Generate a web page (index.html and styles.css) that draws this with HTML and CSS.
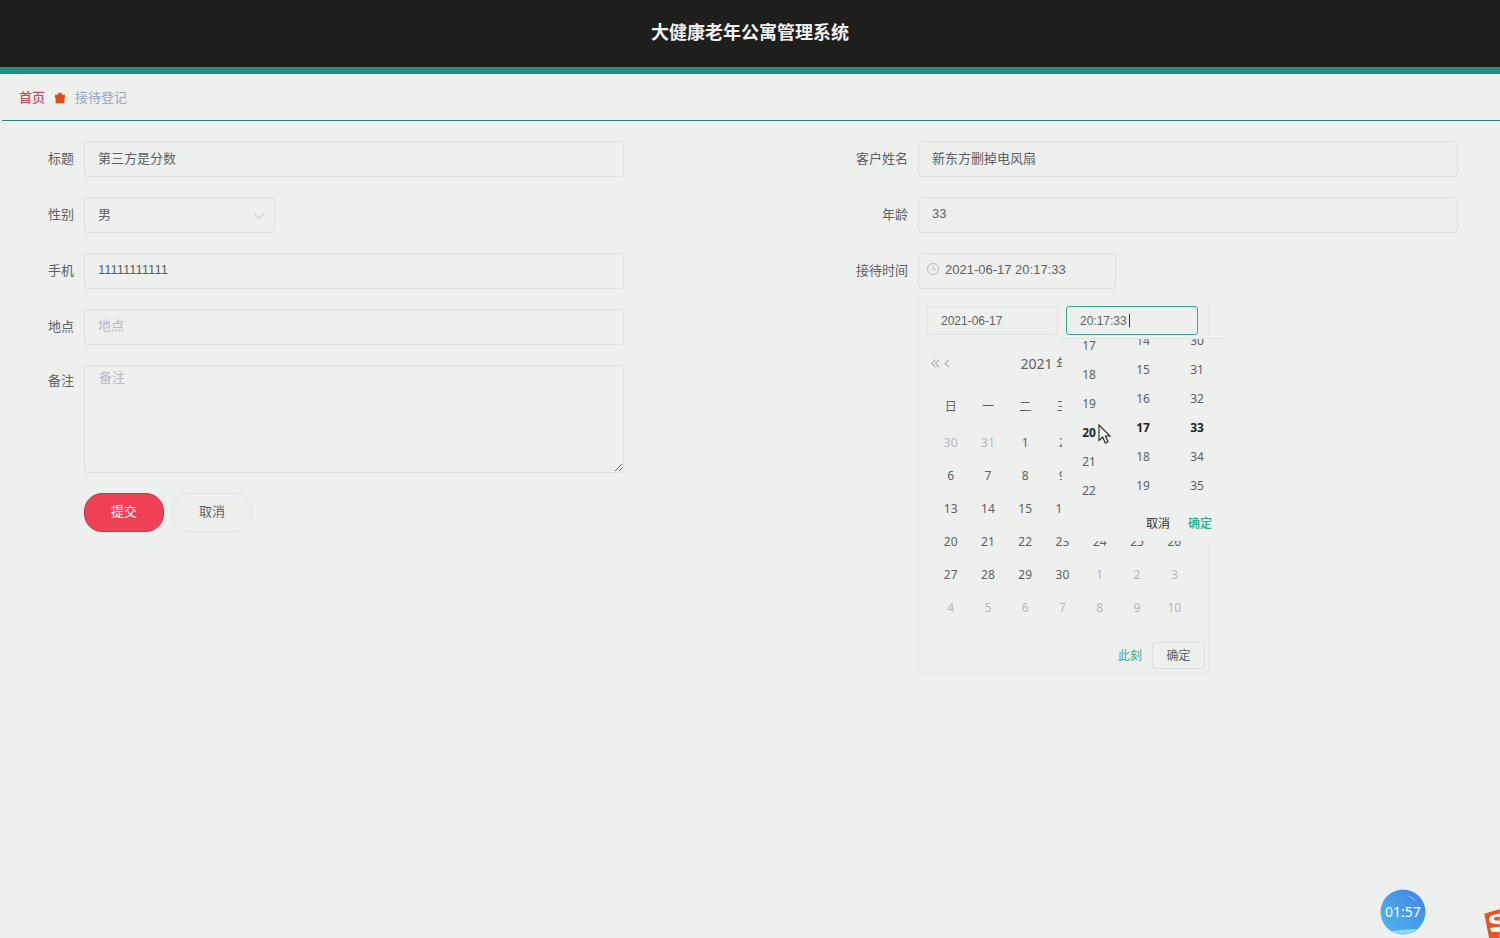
FILE: index.html
```html
<!DOCTYPE html>
<html lang="zh-CN">
<head>
<meta charset="utf-8">
<title>大健康老年公寓管理系统</title>
<link rel="stylesheet" href="styles.css">
</head>
<body>
<header class="topbar"><h1>大健康老年公寓管理系统</h1></header>
<nav class="crumbs" aria-label="面包屑">
  <a href="#" class="home">首页</a>
  <svg class="gift" viewBox="0 0 12 12" aria-hidden="true"><path d="M1 2.800h3L3.400 1.600 5 1.200 6 .3l1 .9 1.600.4L8 2.800h3V6H1zM1.600 5.800h8.800v5.400H1.600z" fill="#e8471c"/></svg>
  <span>接待登记</span>
</nav>
<main>
<form class="form">
  <div class="col">
    <div class="row"><label for="title">标题</label><input id="title" class="field" type="text" value="第三方是分数"></div>
    <div class="row"><label for="sex">性别</label>
      <div class="selectbox"><select id="sex" class="field"><option>男</option><option>女</option></select>
      <svg viewBox="0 0 12 12" aria-hidden="true"><path d="M1.500 4 6 8.500 10.500 4" fill="none" stroke="#b9bdc3"/></svg></div>
    </div>
    <div class="row"><label for="phone">手机</label><input id="phone" class="field" type="text" value="11111111111"></div>
    <div class="row"><label for="place">地点</label><input id="place" class="field" type="text" placeholder="地点"></div>
    <div class="row tall"><label for="note">备注</label><textarea id="note" class="field note" placeholder="备注"></textarea></div>
    <div class="actions"><button type="button" class="submit">提交</button><button type="button" class="cancel">取消</button></div>
  </div>
  <div class="col">
    <div class="row"><label for="name">客户姓名</label><input id="name" class="field" type="text" value="新东方删掉电风扇"></div>
    <div class="row"><label for="age">年龄</label><input id="age" class="field" type="text" value="33"></div>
    <div class="row"><label for="time">接待时间</label>
      <div class="datebox">
        <svg class="clock" viewBox="0 0 14 14" aria-hidden="true"><circle cx="7" cy="7" r="5.500" fill="none" stroke="#b9bdc3"/><path d="M7 3.500V7.500h3" fill="none" stroke="#b9bdc3"/></svg>
        <input id="time" class="field" type="text" value="2021-06-17 20:17:33">
        <section class="picker" aria-label="选择日期时间">
          <div class="picker-inputs">
            <input type="text" aria-label="日期" value="2021-06-17">
            <div class="timebox">
              <input type="text" class="active" aria-label="时间" value="20:17:33"><i class="caret"></i>
              <div class="timepanel">
                <div class="wheels">
                  <ul class="hours"><li>17</li><li>18</li><li>19</li><li class="on">20</li><li>21</li><li>22</li></ul>
                  <ul><li>14</li><li>15</li><li>16</li><li class="on">17</li><li>18</li><li>19</li></ul>
                  <ul><li>30</li><li>31</li><li>32</li><li class="on">33</li><li>34</li><li>35</li></ul>
                </div>
                <div class="time-actions"><button type="button">取消</button><button type="button" class="ok">确定</button></div>
              </div>
            </div>
          </div>
          <div class="month">
            <button type="button" aria-label="上一年"><svg viewBox="0 0 10 10"><path d="M5 .8.900 5 5 9.200M9 .8 4.900 5 9 9.200"/></svg></button>
            <button type="button" aria-label="上个月"><svg viewBox="0 0 10 10"><path d="M6.500.8 2.400 5l4.100 4.200"/></svg></button>
            <strong>2021 年&nbsp;&nbsp; 6 月</strong>
          </div>
          <table>
            <thead><tr><th>日</th><th>一</th><th>二</th><th>三</th><th>四</th><th>五</th><th>六</th></tr></thead>
            <tbody>
              <tr><td class="off">30</td><td class="off">31</td><td>1</td><td>2</td><td>3</td><td>4</td><td>5</td></tr>
              <tr><td>6</td><td>7</td><td>8</td><td>9</td><td>10</td><td>11</td><td>12</td></tr>
              <tr><td>13</td><td>14</td><td>15</td><td>16</td><td>17</td><td>18</td><td>19</td></tr>
              <tr><td>20</td><td>21</td><td>22</td><td>23</td><td>24</td><td>25</td><td>26</td></tr>
              <tr><td>27</td><td>28</td><td>29</td><td>30</td><td class="off">1</td><td class="off">2</td><td class="off">3</td></tr>
              <tr><td class="off">4</td><td class="off">5</td><td class="off">6</td><td class="off">7</td><td class="off">8</td><td class="off">9</td><td class="off">10</td></tr>
            </tbody>
          </table>
          <div class="picker-actions"><button type="button" class="now">此刻</button><button type="button" class="confirm">确定</button></div>
        </section>
      </div>
    </div>
  </div>
</form>
</main>
<svg class="pointer" viewBox="0 0 14 21" aria-hidden="true"><path d="M1 1v15.500l3.700-3.500 2.600 6 2.700-1.200-2.600-5.800H12z" fill="#f4f6f4" stroke="#222" stroke-width="1.100"/></svg>
<div class="timer">
  <svg viewBox="0 0 46 46" aria-hidden="true"><defs><linearGradient id="ball" x1="0" y1="1" x2="1" y2="0"><stop offset="0" stop-color="#56b6ec"/><stop offset=".5" stop-color="#4a9ee9"/><stop offset="1" stop-color="#3f7fe4"/></linearGradient></defs><circle cx="23" cy="23" r="22.500" fill="url(#ball)"/><path d="M11 42q6 0 11-1t15-1q-6 5-14 5-7 0-12-3z" fill="#8adcf3"/><path d="M26 6q7 1 11 8-4-5-11-8z" fill="#8fd0fa"/></svg>
  <span>01:57</span>
</div>
<svg class="ime" viewBox="0 0 16 30" aria-hidden="true"><path d="M0 5 16 0v30H5z" fill="#e4562a"/><path d="M16 5C8 5 4 9 5 12c1 4 7 3 11 4v-4c-3 0-6 0-6-2s3-2 6-2zM6 20q5-2 10-1v5q-5-1-8 0z" fill="#fff"/></svg>
</body>
</html>
```
FILE: styles.css
```css
* { box-sizing: border-box; }
body {
  margin: 0;
  min-height: 100vh;
  overflow: hidden;
  position: relative;
  background: #edf0ed;
  color: #5c5f66;
  font: 13px/20px "Liberation Sans", "Noto Sans CJK SC", sans-serif;
}
button, input, select, textarea { font: inherit; color: inherit; }
button { border: 0; padding: 0; background: none; }
.topbar {
  height: 74px;
  display: flex;
  align-items: center;
  justify-content: center;
  background: #1e1f1d;
  border-bottom: 7px solid #238c85;
  padding-bottom: 2px;
}
.topbar h1 { margin: 0; font-size: 18px; line-height: 24px; color: #f2f2f2; }
.crumbs {
  display: flex;
  align-items: center;
  gap: 9px;
  height: 47px;
  margin-left: 2px;
  padding-left: 17px;
  border-top: 1px solid #e2f6f3;
  border-bottom: 1px solid #2b857e;
  color: #9aa4c0;
}
.home { color: #cc4763; font-weight: 500; text-decoration: none; }
.gift { width: 12px; height: 12px; }
.form { display: flex; gap: 210px; padding: 20px 42px 0 0; }
.col { flex: 1; min-width: 0; display: flex; flex-direction: column; gap: 20px; }
.row { display: flex; }
.row > label { width: 84px; padding-right: 10px; text-align: right; line-height: 36px; flex: none; white-space: nowrap; }
.tall > label { line-height: 32px; }
.field {
  flex: 1;
  min-width: 0;
  width: 100%;
  height: 36px;
  padding: 0 13px 3px;
  border: 1px solid #dcdfe2;
  border-radius: 4px;
  background: transparent;
  outline: 0;
}
.field::placeholder { color: #b7bac4; opacity: 1; }
.note { height: 108px; padding: 2px 14px; resize: vertical; display: block; }
.selectbox { position: relative; width: 191px; }
.selectbox select { appearance: none; padding-bottom: 0; }
.selectbox svg { position: absolute; right: 10px; top: 13px; width: 12px; height: 12px; pointer-events: none; }
.actions { display: flex; gap: 8px; padding-left: 84px; }
.actions button { width: 80px; height: 39px; padding-bottom: 2px; border-radius: 18px; }
.submit { background: #ee4158; border: 1px solid #c5354b; color: #fff; }
.cancel { border: 1px solid #dfe7ea; }
.datebox { position: relative; width: 198px; }
.datebox > .field { padding-left: 26px; }
.clock { position: absolute; left: 8px; top: 9px; width: 14px; height: 14px; }
.picker {
  position: absolute;
  z-index: 2;
  left: 0;
  top: 44px;
  width: 291px;
  border: 1px solid #eaeeeb;
  border-bottom-color: #dfe9e7;
  border-radius: 4px;
  background: #edf0ed;
  font: 12px/20px "Noto Sans", "Noto Sans CJK SC", sans-serif;
}
.picker-inputs { display: flex; gap: 8px; padding: 8px 9px 4px 8px; }
.picker-inputs > input, .timebox > input {
  width: 131px;
  height: 29px;
  padding: 0 13px;
  border: 1px solid #dfe3e4;
  border-radius: 3px;
  background: transparent;
  outline: 0;
  font: 12px/20px "Liberation Sans", sans-serif;
}
.timebox { position: relative; height: 29px; }
.timebox > .active { width: 132px; border-color: #35a792; }
.caret { position: absolute; left: 63px; top: 8px; width: 1px; height: 13px; background: #333; }
.timepanel {
  position: absolute;
  z-index: 3;
  left: -4px;
  top: 32px;
  width: 162px;
  background: #edf0ed;
  border-top: 1px solid #e2e6e4;
}
.wheels { display: flex; height: 168px; overflow: hidden; }
.wheels ul { flex: 1; margin: -13px 0 0; padding: 0; list-style: none; text-align: center; }
.wheels .hours { margin-top: -8px; }
.wheels li { height: 29px; line-height: 29px; }
.wheels .on { font-weight: 700; color: #222428; }
.time-actions { display: flex; justify-content: flex-end; gap: 18px; height: 34px; padding-right: 12px; color: #333; }
.time-actions .ok { color: #22ab8b; font-weight: 500; }
.month { display: flex; align-items: center; gap: 2px; height: 49px; padding-left: 12px; position: relative; }
.month button { width: 10px; height: 20px; display: flex; align-items: center; }
.month svg { width: 9px; height: 9px; fill: none; stroke: #7b7e84; }
.month strong { position: absolute; inset: 0; text-align: center; font-size: 14px; line-height: 49px; font-weight: 400; pointer-events: none; }
table { width: 261px; margin: 0 13px; border-collapse: collapse; table-layout: fixed; }
th, td { height: 33px; padding: 0; text-align: center; font-weight: 400; }
th { height: 38px; }
.off { color: #b3b7c0; }
.picker-actions { display: flex; justify-content: flex-end; gap: 10px; padding: 18px 3px 4px; }
.picker-actions button { height: 27px; }
.now { color: #3aa98f; }
.picker-actions .confirm { width: 53px; border: 1px solid #dcdfe2; border-radius: 3px; }
.pointer { position: absolute; z-index: 4; left: 1098px; top: 424px; width: 14px; height: 21px; }
.timer { position: absolute; right: 74px; bottom: 3px; width: 46px; height: 46px; }
.timer svg { width: 46px; height: 46px; display: block; }
.timer span { position: absolute; inset: 0; text-align: center; color: #fff; font: 14px/46px "Noto Sans", sans-serif; }
.ime { position: absolute; right: 0; bottom: 0; width: 16px; height: 29px; }
```
